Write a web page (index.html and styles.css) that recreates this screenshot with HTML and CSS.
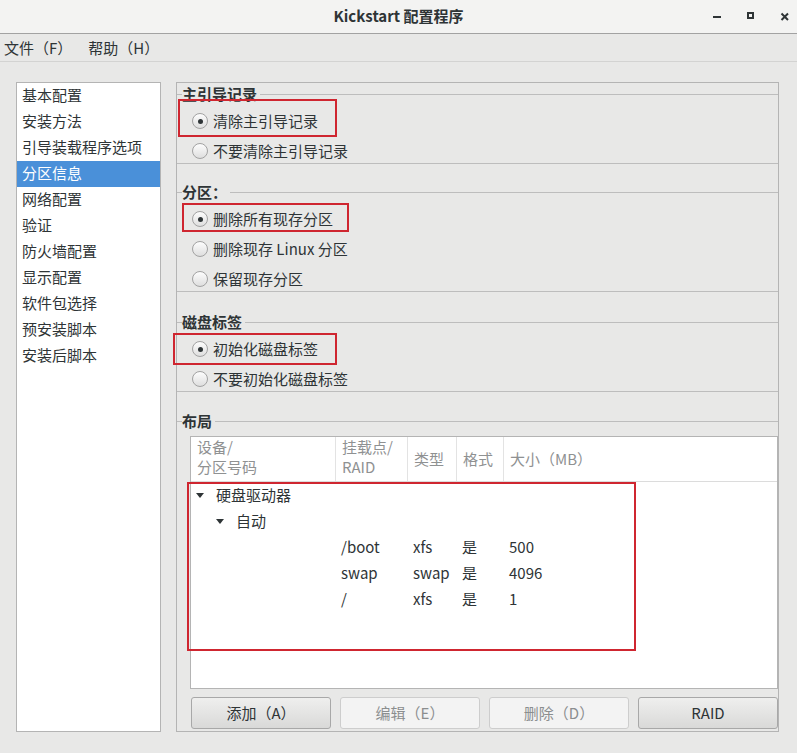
FILE: index.html
```html
<!DOCTYPE html>
<html lang="zh-CN">
<head>
<meta charset="utf-8">
<title>Kickstart 配置程序</title>
<link rel="stylesheet" href="styles.css">
</head>
<body>
<div class="window">
  <header class="titlebar">
    <div class="title">Kickstart 配置程序</div>
    <div class="wm-controls">
      <svg class="wm-icon" width="10" height="10" viewBox="0 0 10 10"><rect x="1" y="4" width="8" height="2" fill="#2e3436"/></svg>
      <svg class="wm-icon" width="10" height="10" viewBox="0 0 10 10"><rect x="2" y="1" width="5" height="5" fill="none" stroke="#2e3436" stroke-width="2"/></svg>
      <svg class="wm-icon" width="10" height="10" viewBox="0 0 10 10"><path d="M1.5 1.5 L8 8 M8 1.5 L1.5 8" stroke="#2e3436" stroke-width="2" fill="none"/></svg>
    </div>
  </header>
  <nav class="menubar">
    <span class="menu-item">文件（F）</span>
    <span class="menu-item">帮助（H）</span>
  </nav>
  <main class="content">
    <ul class="nav">
      <li>基本配置</li>
      <li>安装方法</li>
      <li>引导装载程序选项</li>
      <li class="active">分区信息</li>
      <li>网络配置</li>
      <li>验证</li>
      <li>防火墙配置</li>
      <li>显示配置</li>
      <li>软件包选择</li>
      <li>预安装脚本</li>
      <li>安装后脚本</li>
    </ul>
    <section class="panel">
      <fieldset class="frame frame-mbr">
        <legend>主引导记录</legend>
        <div class="options">
          <label class="opt"><span class="radio on"></span>清除主引导记录</label>
          <label class="opt"><span class="radio"></span>不要清除主引导记录</label>
        </div>
      </fieldset>
      <fieldset class="frame frame-part">
        <legend>分区：</legend>
        <div class="options">
          <label class="opt"><span class="radio on"></span>删除所有现存分区</label>
          <label class="opt"><span class="radio"></span>删除现存 Linux 分区</label>
          <label class="opt"><span class="radio"></span>保留现存分区</label>
        </div>
      </fieldset>
      <fieldset class="frame frame-disk">
        <legend>磁盘标签</legend>
        <div class="options">
          <label class="opt"><span class="radio on"></span>初始化磁盘标签</label>
          <label class="opt"><span class="radio"></span>不要初始化磁盘标签</label>
        </div>
      </fieldset>
      <fieldset class="frame frame-layout">
        <legend>布局</legend>
        <div class="tree">
          <div class="tree-head">
            <div class="th two">设备/<br>分区号码</div>
            <div class="th two">挂载点/<br>RAID</div>
            <div class="th one">类型</div>
            <div class="th one">格式</div>
            <div class="th one last">大小（MB）</div>
          </div>
          <div class="tree-body">
            <div class="row row-node"><span class="caret"></span>硬盘驱动器</div>
            <div class="row row-node lvl2"><span class="caret"></span>自动</div>
            <div class="row row-data"><span></span><span>/boot</span><span>xfs</span><span>是</span><span>500</span></div>
            <div class="row row-data"><span></span><span>swap</span><span>swap</span><span>是</span><span>4096</span></div>
            <div class="row row-data"><span></span><span>/</span><span>xfs</span><span>是</span><span>1</span></div>
          </div>
        </div>
        <div class="actions">
          <button class="btn">添加（A）</button>
          <button class="btn" disabled>编辑（E）</button>
          <button class="btn" disabled>删除（D）</button>
          <button class="btn">RAID</button>
        </div>
      </fieldset>
    </section>
  </main>
  <div class="mark mark-mbr"></div>
  <div class="mark mark-part"></div>
  <div class="mark mark-disk"></div>
  <div class="mark mark-layout"></div>
</div>
</body>
</html>
```
FILE: styles.css
```css
* { box-sizing: border-box; }
html, body { margin: 0; padding: 0; }
body {
  font-family: "Noto Sans CJK SC", "Noto Sans", sans-serif;
  font-size: 15px;
  color: #2e3436;
  background: #e8e8e7;
}
.window {
  position: relative;
  width: 797px;
  height: 753px;
  overflow: hidden;
  display: flex;
  flex-direction: column;
}
.titlebar {
  height: 34px;
  flex: none;
  display: grid;
  grid-template-columns: 1fr auto 1fr;
  align-items: center;
  background: #f3f3f2;
  border-bottom: 1px solid #a2a2a2;
}
.title {
  grid-column: 2;
  font-weight: bold;
  line-height: 20px;
  color: #2e3436;
  margin-top: -2px;
}
.wm-controls {
  grid-column: 3;
  justify-self: end;
  display: flex;
  gap: 24px;
  padding-right: 7px;
}
.wm-icon { display: block; }
.menubar {
  height: 28px;
  flex: none;
  display: flex;
  gap: 16px;
  padding-left: 4px;
  align-items: center;
  border-bottom: 1px solid #d3d3d2;
  line-height: 27px;
}
.content {
  flex: 1;
  display: flex;
  gap: 15px;
  padding: 20px 18px 21px 16px;
}
.nav {
  list-style: none;
  margin: 0;
  padding: 0;
  width: 145px;
  flex: none;
  background: #fff;
  border: 1px solid #b4b4b4;
}
.nav li {
  height: 26px;
  line-height: 24px;
  padding-left: 5px;
  white-space: nowrap;
}
.nav li.active { background: #4a90d9; color: #fff; }
.panel {
  flex: 1;
  border: 1px solid #b4b4b4;
  display: flex;
  flex-direction: column;
}
.frame {
  margin: 20px 0 0;
  padding: 6px 0 0 5px;
  border: 0;
  border-top: 1px solid #bdbdbd;
  border-bottom: 1px solid #bdbdbd;
  min-width: 0;
}
.frame-mbr { margin-top: 2px; }
.frame-part { margin-top: 19px; }
.frame-disk { margin-top: 21px; }
.frame-layout { margin-top: 20px; border-bottom: 0; padding-bottom: 2px; }
.frame legend {
  padding: 0 3px 0 0;
  font-weight: bold;
  line-height: 18px;
}
.options {
  display: flex;
  flex-direction: column;
  gap: 6px;
  padding-left: 10px;
}
.opt {
  height: 24px;
  display: flex;
  align-items: center;
  gap: 5px;
  line-height: 24px;
}
.radio {
  position: relative;
  flex: none;
  width: 16px;
  height: 16px;
  border-radius: 50%;
  border: 1px solid #a2a2a2;
  background: linear-gradient(#fdfdfd, #dedede);
}
.radio.on::after {
  content: "";
  position: absolute;
  left: 4.5px;
  top: 4.5px;
  width: 5px;
  height: 5px;
  border-radius: 50%;
  background: #2e3436;
}
.tree {
  margin-left: 8px;
  height: 253px;
  background: #fff;
  border: 1px solid #b4b4b4;
}
.tree-head {
  display: grid;
  grid-template-columns: 145px 72px 49px 47px 1fr;
  height: 45px;
  border-bottom: 1px solid #dcdcdc;
  color: #8f9192;
}
.th {
  padding-left: 6px;
  border-right: 1px solid #e3e3e3;
  white-space: nowrap;
}
.th.two { line-height: 20px; }
.th.one { line-height: 44px; }
.th.last { border-right: 0; }
.row {
  height: 26px;
  line-height: 26px;
  display: flex;
  align-items: center;
}
.row-node { padding-left: 5px; }
.row-node.lvl2 { padding-left: 25px; }
.caret {
  width: 0;
  height: 0;
  border-left: 4px solid transparent;
  border-right: 4px solid transparent;
  border-top: 5px solid #2e3436;
  margin-right: 12px;
}
.row-data {
  display: grid;
  grid-template-columns: 145px 72px 49px 47px 1fr;
}
.row-data span { padding-left: 5px; white-space: nowrap; }
.actions {
  margin: 8px 0 0 9px;
  display: grid;
  grid-template-columns: repeat(4, 1fr);
  gap: 9px;
}
.btn {
  height: 32px;
  font: inherit;
  color: #2e3436;
  border: 1px solid #a8a8a8;
  border-radius: 3px;
  background: linear-gradient(#efefee, #d9d9d8);
  line-height: 30px;
  padding: 0;
}
.btn:disabled {
  background: #f3f3f3;
  border-color: #cdcdcd;
  color: #8b8e8f;
}
.mark {
  position: absolute;
  border: 2px solid #cf2630;
  pointer-events: none;
}
.mark-mbr { left: 178px; top: 99px; width: 159px; height: 38px; }
.mark-part { left: 182px; top: 203px; width: 167px; height: 29px; }
.mark-disk { left: 173px; top: 333px; width: 164px; height: 32px; }
.mark-layout { left: 187px; top: 482px; width: 449px; height: 169px; }
```
